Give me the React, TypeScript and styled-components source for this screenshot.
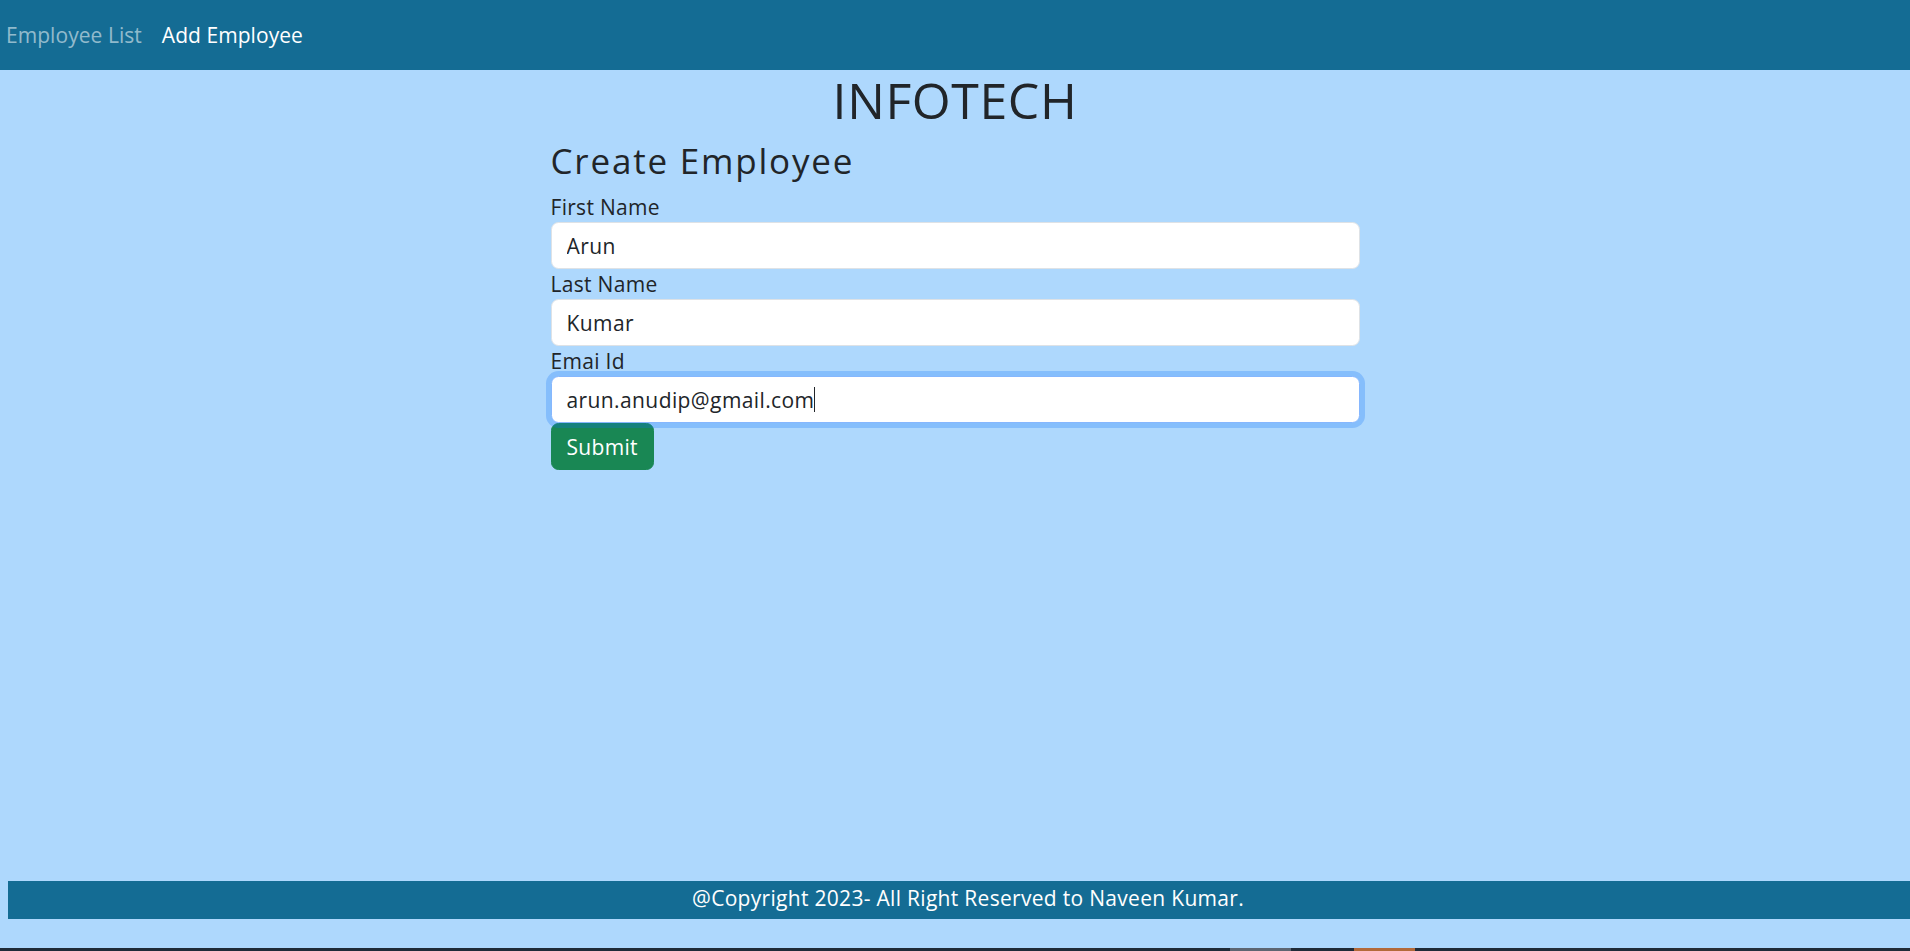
import React from "react";
import styled, { createGlobalStyle } from "styled-components";

const FONT = `"Open Sans", "Noto Sans", Arial, sans-serif`;

const GlobalStyle = createGlobalStyle`
  html, body {
    margin: 0;
    padding: 0;
    background: #aed8fd;
    font-family: ${FONT};
    color: #212529;
    overflow: hidden;
  }
  * { box-sizing: border-box; }
`;

const Page = styled.div`
  min-height: 100vh;
  display: flex;
  flex-direction: column;
`;

const NavBar = styled.nav`
  height: 70px;
  background: #146c94;
  display: flex;
  align-items: center;
  padding-left: 6px;
  gap: 20px;
`;

const NavLink = styled.a<{ $active?: boolean }>`
  font-size: 21px;
  line-height: 30px;
  letter-spacing: 0.05px;
  text-decoration: none;
  color: ${(p) => (p.$active ? "#ffffff" : "rgba(255,255,255,0.55)")};
  cursor: pointer;
`;

const Main = styled.main`
  flex: 1;
  display: flex;
  flex-direction: column;
  align-items: center;
`;

const Brand = styled.h1`
  margin: 0 0 10px;
  font-size: 50px;
  line-height: 60px;
  font-weight: 500;
  letter-spacing: 0.6px;
  text-align: center;
`;

const FormCard = styled.div`
  width: 809px;
  display: flex;
  flex-direction: column;
`;

const Title = styled.h3`
  margin: 0 0 10px;
  font-size: 35px;
  line-height: 42px;
  font-weight: 500;
  letter-spacing: 1.8px;
`;

const Label = styled.label`
  display: block;
  font-size: 21px;
  line-height: 30px;
  letter-spacing: 0.3px;
`;

const FieldWrap = styled.div`
  position: relative;
`;

const Input = styled.input<{ $focused?: boolean }>`
  display: block;
  width: 100%;
  height: 47px;
  padding: 0 15px;
  font-family: ${FONT};
  font-size: 21px;
  letter-spacing: 0.4px;
  color: #212529;
  background: #fff;
  border: 1px solid ${(p) => (p.$focused ? "#86b7fe" : "#dee2e6")};
  border-radius: 7.5px;
  outline: none;
  box-shadow: ${(p) => (p.$focused ? "0 0 0 5px rgba(13,110,253,0.25)" : "none")};
`;

const CaretMirror = styled.span`
  position: absolute;
  left: 16px;
  top: 0;
  height: 47px;
  display: flex;
  align-items: center;
  font-size: 21px;
  letter-spacing: 0.4px;
  color: transparent;
  pointer-events: none;
  white-space: pre;
`;

const Caret = styled.span`
  display: inline-block;
  width: 1px;
  height: 25px;
  background: #212529;
`;

const SubmitButton = styled.button`
  align-self: flex-start;
  height: 47px;
  padding: 0 15px;
  font-family: ${FONT};
  font-size: 21px;
  letter-spacing: 0.3px;
  color: #fff;
  background: #198754;
  border: 1px solid #198754;
  border-radius: 7.5px;
  cursor: pointer;
`;

const Footer = styled.footer`
  margin-left: 8px;
  height: 38px;
  background: #146c94;
  color: #fff;
  font-size: 21px;
  letter-spacing: 0.3px;
  line-height: 34px;
  text-align: center;
  padding-left: 18px;
`;

const BottomGap = styled.div`
  height: 29px;
`;

const Taskbar = styled.div`
  height: 3px;
  background: #1f2b38;
  display: flex;
`;

const TaskItem = styled.div<{ $color: string; $offset: number }>`
  width: 61px;
  margin-left: ${(p) => p.$offset}px;
  background: ${(p) => p.$color};
`;

export default function App() {
  const email = "arun.anudip@gmail.com";
  return (
    <>
      <GlobalStyle />
      <Page>
        <NavBar>
          <NavLink>Employee List</NavLink>
          <NavLink $active>Add Employee</NavLink>
        </NavBar>
        <Main>
          <Brand>INFOTECH</Brand>
          <FormCard>
            <Title>Create Employee</Title>
            <Label htmlFor="fn">First Name</Label>
            <Input id="fn" defaultValue="Arun" />
            <Label htmlFor="ln">Last Name</Label>
            <Input id="ln" defaultValue="Kumar" />
            <Label htmlFor="em">Emai Id</Label>
            <FieldWrap>
              <Input id="em" $focused defaultValue={email} />
              <CaretMirror>
                {email}
                <Caret />
              </CaretMirror>
            </FieldWrap>
            <SubmitButton type="button">Submit</SubmitButton>
          </FormCard>
        </Main>
        <Footer>@Copyright 2023- All Right Reserved to Naveen Kumar.</Footer>
        <BottomGap />
        <Taskbar>
          <TaskItem $color="#5d6672" $offset={1230} />
          <TaskItem $color="#b36a3a" $offset={63} />
        </Taskbar>
      </Page>
    </>
  );
}
